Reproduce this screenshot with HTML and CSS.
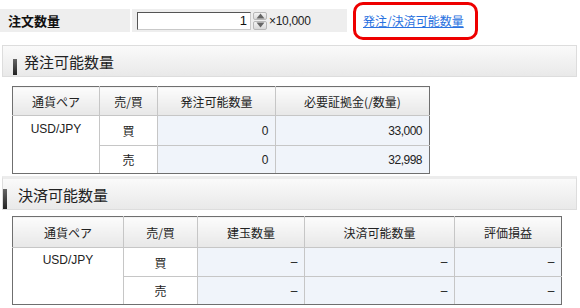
FILE: index.html
```html
<!DOCTYPE html>
<html lang="ja">
<head>
    <meta charset="UTF-8">
    <title>注文数量</title>
    <link rel="stylesheet" href="styles.css">
</head>
<body>
    <div class="order-row">
        <div class="cell label">注文数量</div>
        <div class="cell field">
            <input type="text" class="qty" value="1" readonly>
            <span class="spinner">
                <span class="spin-btn"><svg width="9" height="6" viewBox="0 0 9 6"><path d="M4.5 0.5 L8.5 5.5 L0.5 5.5 Z" fill="#666"/></svg></span>
                <span class="spin-btn"><svg width="9" height="6" viewBox="0 0 9 6"><path d="M0.5 0.5 L8.5 0.5 L4.5 5.5 Z" fill="#666"/></svg></span>
            </span>
            <span class="unit">×10,000</span>
        </div>
        <div class="highlight"><a href="#">発注/決済可能数量</a></div>
    </div>

    <!-- 発注可能数量 -->
    <div class="section-head head-order"><span class="mark"></span>発注可能数量</div>
    <table class="grid grid-order">
        <colgroup>
            <col style="width:87px"><col style="width:58px"><col style="width:118px"><col style="width:154px">
        </colgroup>
        <tr class="head-row">
            <th>通貨ペア</th><th>売/買</th><th>発注可能数量</th><th>必要証拠金(/数量)</th>
        </tr>
        <tr class="row-a">
            <td class="pair" rowspan="2">USD/JPY</td><td class="side">買</td><td class="num">0</td><td class="num">33,000</td>
        </tr>
        <tr class="row-b">
            <td class="side">売</td><td class="num">0</td><td class="num">32,998</td>
        </tr>
    </table>

    <!-- 決済可能数量 -->
    <div class="section-head head-settle"><span class="mark"></span>決済可能数量</div>
    <table class="grid grid-settle">
        <colgroup>
            <col style="width:111px"><col style="width:74px"><col style="width:107px"><col style="width:150px"><col style="width:107px">
        </colgroup>
        <tr class="head-row">
            <th>通貨ペア</th><th>売/買</th><th>建玉数量</th><th>決済可能数量</th><th>評価損益</th>
        </tr>
        <tr class="row-a">
            <td class="pair" rowspan="2">USD/JPY</td><td class="side">買</td><td class="num">–</td><td class="num">–</td><td class="num">–</td>
        </tr>
        <tr class="row-b">
            <td class="side">売</td><td class="num">–</td><td class="num">–</td><td class="num">–</td>
        </tr>
    </table>
</body>
</html>
```

FILE: styles.css
```css
/* Base */
* {
    margin: 0;
    padding: 0;
    box-sizing: border-box;
}

body {
    font-family: "Noto Sans CJK JP", "Liberation Sans", sans-serif;
    font-size: 12px;
    color: #222222;
    background-color: #ffffff;
    width: 580px;
    height: 308px;
    overflow: hidden;
}

/* Order quantity row */
.order-row {
    display: flex;
    align-items: center;
    height: 40px;
    padding-top: 1px;
}

.cell {
    height: 23px;
    background-color: #eeeeee;
    display: flex;
    align-items: center;
}

.label {
    width: 130px;
    padding-left: 8px;
    font-size: 13px;
    font-weight: bold;
    color: #111111;
    margin-right: 2px;
}

.field {
    width: 215px;
    padding-left: 5px;
}

.qty {
    width: 114px;
    height: 18px;
    border: 1px solid #c9c9c9;
    border-top-color: #555555;
    border-left-color: #555555;
    background-color: #ffffff;
    text-align: right;
    padding-right: 3px;
    font-family: "Liberation Sans", sans-serif;
    font-size: 13px;
    color: #111111;
    outline: none;
}

.spinner {
    display: flex;
    flex-direction: column;
    width: 14px;
    height: 18px;
    margin-left: 2px;
    gap: 1px;
}

.spin-btn {
    flex: 1;
    display: flex;
    align-items: center;
    justify-content: center;
    background: linear-gradient(#f4f4f4, #d8d8d8);
    border: 1px solid #b8b8b8;
    border-radius: 2px;
}

.unit {
    margin-left: 2px;
    font-family: "Liberation Sans", sans-serif;
    font-size: 12px;
    letter-spacing: -0.3px;
    color: #222222;
}

.highlight {
    margin-left: 6px;
    height: 38px;
    width: 125px;
    border: 3px solid #ee0000;
    border-radius: 10px;
    display: flex;
    align-items: center;
    padding-left: 7px;
}

.highlight a {
    color: #2a72e0;
    font-size: 12px;
    text-decoration: underline;
}

/* Section headers */
.section-head {
    display: flex;
    align-items: center;
    margin: 0 3px 0 2px;
    border: 1px solid #dddddd;
    background: linear-gradient(#fafafa, #e9e9e9);
    font-size: 15px;
    color: #222222;
}

.mark {
    display: block;
    width: 4px;
    background: linear-gradient(#666666, #222222);
}

.head-order {
    margin-top: 5px;
    height: 32px;
    padding-left: 10px;
}

.head-order .mark {
    height: 16px;
    margin-top: 12px;
    margin-right: 7px;
}

.head-settle {
    margin-top: 2px;
    height: 34px;
    padding-left: 0;
    border-top: 3px solid #ececec;
}

.head-settle .mark {
    height: 20px;
    margin-top: 10px;
    margin-right: 11px;
}

/* Tables */
.grid {
    border-collapse: collapse;
    table-layout: fixed;
    margin-left: 12px;
    border: 1px solid #6f6f6f;
}

.grid-order {
    margin-top: 9px;
}

.grid-settle {
    margin-top: 6px;
}

.grid th,
.grid td {
    border: 1px solid #c6c6c6;
    font-weight: normal;
    font-size: 12px;
    color: #222222;
    text-align: center;
}

.grid tr:first-child th {
    border-top-color: #6f6f6f;
}

.grid th:first-child,
.grid td.pair {
    border-left-color: #6f6f6f;
}

.grid th:last-child,
.grid td:last-child {
    border-right-color: #6f6f6f;
}

.grid .row-b td,
.grid td.pair {
    border-bottom-color: #6f6f6f;
}

.head-row th {
    background: linear-gradient(#fcfcfc, #e7e7e7);
}

.grid-order .head-row { height: 29px; }
.grid-order .row-a { height: 30px; }
.grid-order .row-b { height: 28px; }

.grid-settle .head-row { height: 31px; }
.grid-settle .row-a { height: 29px; }
.grid-settle .row-b { height: 28px; }

td.pair {
    vertical-align: top;
    padding-top: 6px;
    background-color: #ffffff;
    font-family: "Liberation Sans", sans-serif;
}

.grid-settle td.pair {
    padding-top: 5px;
}

td.side {
    background-color: #ffffff;
}

td.num {
    text-align: right;
    padding-right: 7px;
    background-color: #f0f4fa;
    font-family: "Liberation Sans", sans-serif;
    letter-spacing: -0.5px;
}
```
